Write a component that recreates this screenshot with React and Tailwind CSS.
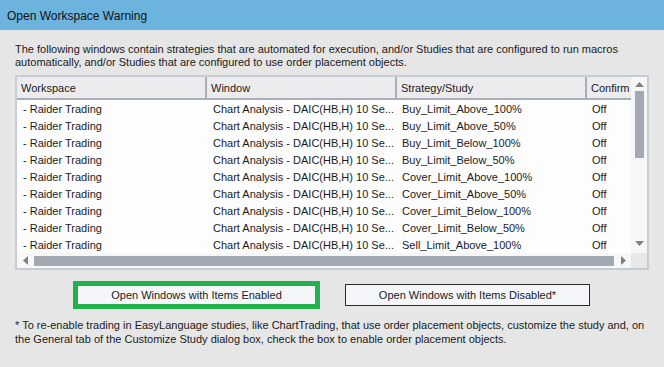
const rows = [
  'Buy_Limit_Above_100%',
  'Buy_Limit_Above_50%',
  'Buy_Limit_Below_100%',
  'Buy_Limit_Below_50%',
  'Cover_Limit_Above_100%',
  'Cover_Limit_Above_50%',
  'Cover_Limit_Below_100%',
  'Cover_Limit_Below_50%',
  'Sell_Limit_Above_100%',
]

export default function App() {
  return (
    <div className="w-[664px] h-[367px] bg-[#e6e6e6] text-[11px] text-[#1b1b1b] overflow-hidden" style={{ fontFamily: '"Liberation Sans", Arial, sans-serif' }}>
      {/* title bar */}
      <div className="h-[30px] bg-[#6cb4de] flex items-center px-[7px] pt-[2px] text-[12px] text-[#111]">
        Open Workspace Warning
      </div>

      <div className="px-[15px]">
        <p className="mt-[13px] leading-[13px]">
          The following windows contain strategies that are automated for execution, and/or Studies that are configured to run macros automatically, and/or Studies that are configured to use order placement objects.
        </p>

        {/* table */}
        <div className="mt-[6px] w-[634px] h-[195px] border-2 border-[#c7ccd4] bg-white flex flex-col">
          <div className="flex h-[176px]">
            <div className="w-[614px] overflow-hidden">
              <div className="flex h-[23px] bg-[#ececef] border-b-2 border-[#a9aeb7] whitespace-nowrap">
                <div className="w-[190px] shrink-0 border-r-2 border-[#a9aeb7] pl-[4px] pt-[1px] flex items-center">Workspace</div>
                <div className="w-[190px] shrink-0 border-r-2 border-[#a9aeb7] pl-[4px] pt-[1px] flex items-center">Window</div>
                <div className="w-[190px] shrink-0 border-r-2 border-[#a9aeb7] pl-[4px] pt-[1px] flex items-center">Strategy/Study</div>
                <div className="w-[60px] shrink-0 pl-[4px] pt-[1px] flex items-center">Confirm</div>
              </div>
              {rows.map((r) => (
                <div key={r} className="flex h-[17px] pt-[1px] items-center whitespace-nowrap bg-[#fdfdfe]">
                  <div className="w-[190px] shrink-0 pl-[6px]">- Raider Trading</div>
                  <div className="w-[190px] shrink-0 pl-[6px] overflow-hidden">Chart Analysis - DAIC(HB,H) 10 Se...</div>
                  <div className="w-[190px] shrink-0 pl-[5px]">{r}</div>
                  <div className="w-[40px] shrink-0 pl-[5px]">Off</div>
                </div>
              ))}
            </div>
            {/* vertical scrollbar */}
            <div className="w-[16px] bg-[#f7f7f8] flex flex-col items-center">
              <svg width="9" height="5" viewBox="0 0 9 5" className="mt-[5px]"><path d="M0 5 L4.5 0 L9 5Z" fill="#808080" /></svg>
              <div className="mt-[4px] w-[9px] h-[67px] bg-[#a3a9b2]" />
              <div className="flex-1" />
              <svg width="9" height="5" viewBox="0 0 9 5" className="mb-[7px]"><path d="M0 0 L4.5 5 L9 0Z" fill="#808080" /></svg>
            </div>
          </div>
          {/* horizontal scrollbar */}
          <div className="flex h-[15px]">
            <div className="w-[614px] bg-[#f7f7f8] flex items-center">
              <svg width="5" height="9" viewBox="0 0 5 9" className="ml-[6px]"><path d="M5 0 L0 4.5 L5 9Z" fill="#808080" /></svg>
              <div className="ml-[6px] w-[580px] h-[10px] bg-[#a3a9b2]" />
              <svg width="5" height="9" viewBox="0 0 5 9" className="ml-[7px]"><path d="M0 0 L5 4.5 L0 9Z" fill="#808080" /></svg>
            </div>
            <div className="w-[16px] bg-[#e8e8e9]" />
          </div>
        </div>

        {/* buttons */}
        <div className="flex items-center mt-[11px] h-[28px]">
          <button className="ml-[58px] w-[247px] h-[28px] border-[5px] border-[#22b14c] bg-[#f5f6fa] flex items-center justify-center">
            Open Windows with Items Enabled
          </button>
          <button className="ml-[25px] w-[245px] h-[22px] border border-[#2b2b2b] bg-[#f5f6fa] flex items-center justify-center">
            Open Windows with Items Disabled*
          </button>
        </div>

        <p className="mt-[9px] leading-[14px]">
          * To re-enable trading in EasyLanguage studies, like ChartTrading, that use order placement objects, customize the study and, on the General tab of the Customize Study dialog box, check the box to enable order placement objects.
        </p>
      </div>
    </div>
  )
}
